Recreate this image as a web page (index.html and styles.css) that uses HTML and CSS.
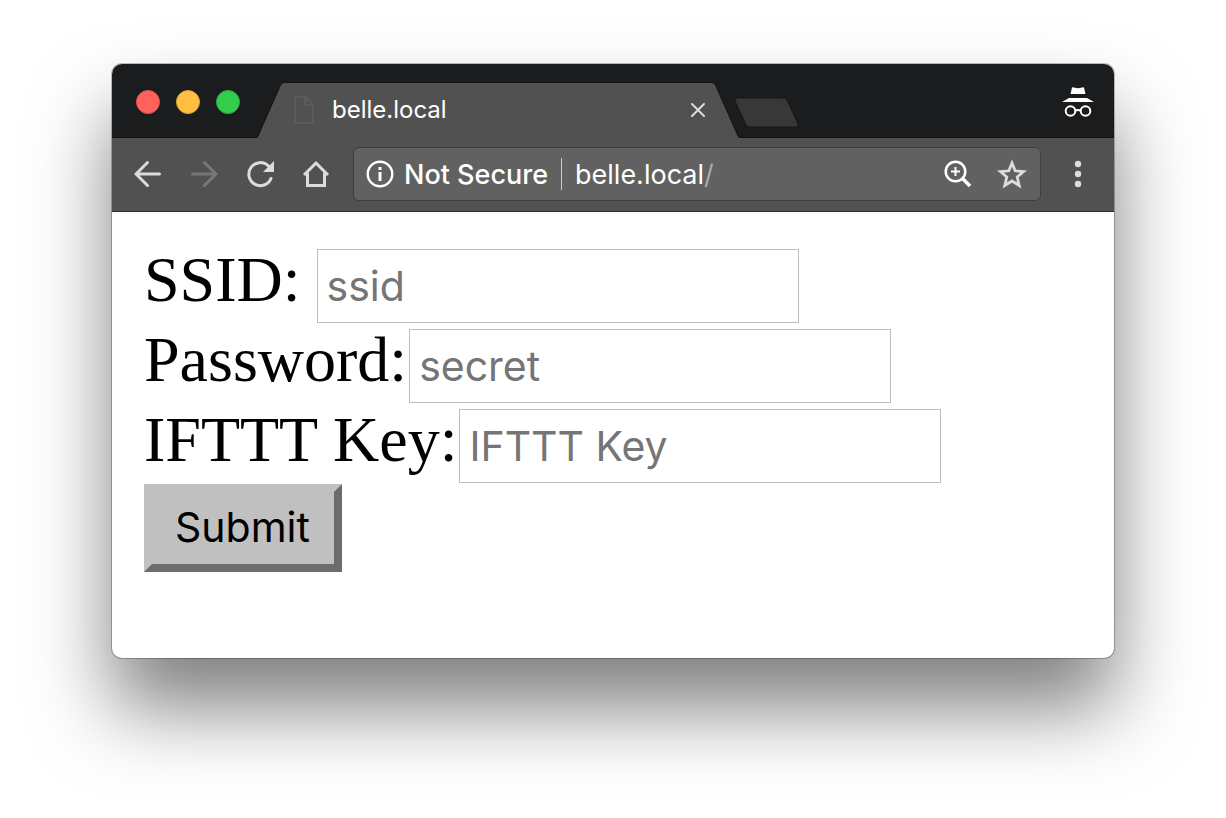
FILE: index.html
```html
<!DOCTYPE html>
<html lang="en">
<head>
<meta charset="utf-8">
<title>belle.local</title>
<link rel="stylesheet" href="styles.css">
</head>
<body>
<div class="window">
  <header class="tabbar">
    <div class="lights">
      <button class="light light-close" aria-label="Close window"></button>
      <button class="light light-min" aria-label="Minimize window"></button>
      <button class="light light-max" aria-label="Zoom window"></button>
    </div>
    <div class="tab">
      <svg class="tab-edge" viewBox="0 0 28 56" aria-hidden="true"><path class="tab-fill" d="M0 56Q1.500 56 2.500 54L25 3Q26 1 28 1V56Z"/><path class="tab-line" d="M0 55.500Q1 55.500 2 53.500L24.500 2.500Q25.500 .5 28 .5"/></svg>
      <div class="tab-body">
        <svg class="page-icon" viewBox="0 0 20 28" aria-hidden="true"><path d="M1 1H12L19 8V27H1ZM11 1V9H19"/></svg>
        <span class="tab-title">belle.local</span>
        <button class="icon-button tab-close" aria-label="Close tab"><svg width="16" height="16" viewBox="0 0 16 16"><path class="line" d="M2 2L14 14M14 2L2 14"/></svg></button>
      </div>
      <svg class="tab-edge" viewBox="0 0 28 56" aria-hidden="true"><path class="tab-fill" d="M28 56Q26.500 56 25.500 54L3 3Q2 1 0 1V56Z"/><path class="tab-line" d="M28 55.500Q27 55.500 26 53.500L3.500 2.500Q2.500 .5 0 .5"/></svg>
    </div>
    <button class="icon-button new-tab" aria-label="New tab"><svg width="66" height="32" viewBox="0 0 66 32"><path d="M4 1H50Q53 1 54 3L65 27Q66 30 63 30H16Q14 30 13 28L2 4Q1 1 4 1Z" fill="#383838" stroke="#161718"/></svg></button>
    <svg class="incognito" width="32" height="32" viewBox="0 0 32 32" role="img" aria-label="Incognito">
      <path fill="#fff" d="M8.500 8L10 1.500Q11 1 12 1.500Q16 3 20 1.500Q21 1 22 1.500L23.500 8ZM0 16L7 12H25L32 16Z"/>
      <g fill="none" stroke="#fff" stroke-width="2"><circle cx="8.500" cy="25" r="4.800"/><circle cx="23.500" cy="25" r="4.800"/><path d="M13 25Q16 23 19 25"/></g>
    </svg>
  </header>
  <nav class="toolbar">
    <button class="icon-button" aria-label="Back"><svg width="28" height="28" viewBox="0 0 28 28"><path class="line" d="M25.500 14H2.500M13.500 2.500L2 14L13.500 25.500"/></svg></button>
    <button class="icon-button" aria-label="Forward" disabled><svg width="28" height="28" viewBox="0 0 28 28"><path class="line" d="M2.500 14H25.500M14.500 2.500L26 14L14.500 25.500"/></svg></button>
    <button class="icon-button" aria-label="Reload"><svg width="28" height="28" viewBox="0 0 28 28"><path class="line" d="M22.500 6A11.500 11.500 0 1 0 25 18.500"/><path fill="#dcdcdc" d="M28 1V12H17Z"/></svg></button>
    <button class="icon-button" aria-label="Home"><svg width="28" height="28" viewBox="0 0 28 28"><path class="line home" d="M2 15L14 3L26 15M5.500 13V25.500H22.500V13"/></svg></button>
    <div class="address">
      <svg width="28" height="28" viewBox="0 0 28 28" aria-hidden="true"><circle cx="14" cy="14" r="12.300" fill="none" stroke="#fff" stroke-width="2.400"/><path fill="#fff" d="M12.500 7H15.500V10H12.500ZM12.500 12H15.500V21H12.500Z"/></svg>
      <span class="security">Not Secure</span>
      <span class="divider"></span>
      <span class="url">belle.local<span class="path">/</span></span>
      <button class="icon-button" aria-label="Zoom level"><svg width="28" height="28" viewBox="0 0 28 28"><g fill="none" stroke="#fff"><circle cx="11.500" cy="11.500" r="9.800" stroke-width="2.500"/><path stroke-width="3.500" d="M18.500 18.500L26 26"/><path stroke-width="2" d="M11.500 7V16M7 11.500H16"/></g></svg></button>
      <button class="icon-button" aria-label="Bookmark"><svg width="30" height="30" viewBox="0 0 30 30"><path fill="none" stroke="#dcdcdc" stroke-width="2.800" d="M15 4L18.200 11.800L26.500 12.500L20.200 18L22.200 26.500L15 22L7.800 26.500L9.800 18L3.500 12.500L11.800 11.800Z"/></svg></button>
    </div>
    <button class="icon-button menu" aria-label="Menu"><svg width="8" height="28" viewBox="0 0 8 28"><g fill="#dcdcdc"><circle cx="4" cy="4" r="3.200"/><circle cx="4" cy="14" r="3.200"/><circle cx="4" cy="24" r="3.200"/></g></svg></button>
  </nav>
  <main class="page">
    <form class="form">
      <div class="field"><label for="ssid">SSID: </label><input id="ssid" type="text" placeholder="ssid"></div>
      <div class="field"><label for="password">Password:</label><input id="password" type="text" placeholder="secret"></div>
      <div class="field"><label for="key">IFTTT Key:</label><input id="key" type="text" placeholder="IFTTT Key"></div>
      <button class="submit" type="submit">Submit</button>
    </form>
  </main>
</div>
</body>
</html>
```
FILE: styles.css
```css
* { box-sizing: border-box; }
body {
  margin: 0;
  padding: 64px 112px 160px;
  background: #fff;
  font-family: Inter, "Liberation Sans", sans-serif;
}
svg { display: block; flex: none; }
.window {
  border-radius: 10px;
  background: #fff;
  overflow: hidden;
  box-shadow: 0 0 0 1px rgba(0, 0, 0, 0.25), 0 50px 80px rgba(0, 0, 0, 0.5);
}
.tabbar {
  display: flex;
  align-items: flex-end;
  height: 74px;
  padding: 0 20px 0 24px;
  background: #1b1c1e;
  box-shadow: inset 0 -1px #121213;
}
.lights { display: flex; gap: 16px; margin: 0 16px 24px 0; }
.light {
  width: 24px;
  height: 24px;
  padding: 0;
  border: 1px solid;
  border-radius: 50%;
}
.light-close { background: #ff625c; border-color: #e2504c; }
.light-min { background: #ffbf43; border-color: #dfa134; }
.light-max { background: #34cc4b; border-color: #27ae3a; }
.tab { display: flex; flex: 0 1 484px; height: 56px; min-width: 0; }
.tab-edge { width: 28px; height: 56px; }
.tab-fill { fill: #515151; }
.tab-line { fill: none; stroke: #151516; }
.tab-body {
  display: flex;
  flex: 1;
  align-items: center;
  min-width: 0;
  padding: 0 6px 2px 10px;
  background: #515151;
  border-top: 1px solid #151516;
}
.page-icon { width: 20px; height: 28px; fill: none; stroke: #5b5b5b; stroke-width: 2; }
.tab-title {
  flex: 1;
  margin-left: 18px;
  color: #fff;
  font-size: 24px;
  line-height: 32px;
}
.icon-button { display: block; flex: none; padding: 0; border: 0; background: none; }
.line { fill: none; stroke: #dcdcdc; stroke-width: 3; stroke-linecap: round; }
.tab-close .line { stroke-width: 2; }
.home { stroke-linecap: butt; }
.icon-button:disabled .line { stroke: #777; }
.new-tab { margin: 0 auto 9px -7px; }
.incognito { margin-bottom: 20px; }
.toolbar {
  display: flex;
  align-items: center;
  gap: 28px;
  height: 74px;
  padding: 0 32px 2px 22px;
  background: #515151;
  border-bottom: 1px solid #2c2c2c;
}
.address {
  display: flex;
  flex: 1;
  align-items: center;
  min-width: 0;
  height: 54px;
  margin-left: -5px;
  padding: 0 13px 0 12px;
  border: 1px solid #3e3e3e;
  border-radius: 6px;
  background: #616161;
  color: #fff;
  font-size: 27px;
  line-height: 36px;
}
.security, .url { padding-top: 2px; }
.security { margin-left: 10px; font-weight: 500; white-space: nowrap; }
.divider { width: 1px; height: 32px; margin: 0 13px; background: #ccc; }
.url { flex: 1; }
.path { color: #aaa; }
.address .icon-button + .icon-button { margin-left: 25px; }
.menu { margin-left: 5px; }
.page { padding: 37px 32px 86px; }
.field { display: flex; align-items: baseline; }
.field + .field { margin-top: 6px; }
.field label {
  flex: none;
  white-space: pre;
  color: #000;
  font: 64px/60px "Liberation Serif", serif;
}
.field input {
  flex: 0 1 482px;
  min-width: 0;
  height: 74px;
  margin: 0;
  padding: 0 9px;
  border: 1px solid #bdbdbd;
  border-radius: 0;
  background: #fff;
  font: 41px/72px Inter, "Liberation Sans", sans-serif;
}
.field + .field input { margin-left: 2px; }
.field input::placeholder { color: #757575; opacity: 1; }
.submit {
  display: block;
  height: 88px;
  margin-top: 1px;
  padding: 0 24px 2px 23px;
  border: 8px solid;
  border-color: #c0c0c0 #6c6c6c #6c6c6c #c0c0c0;
  background: #c0c0c0;
  color: #000;
  font: 41px/70px Inter, "Liberation Sans", sans-serif;
}
```
